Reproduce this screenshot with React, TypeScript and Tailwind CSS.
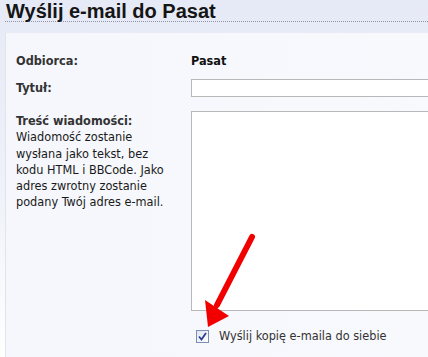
export default function App() {
  return (
    <div className="relative h-[357px] w-[428px] overflow-hidden bg-gradient-to-b from-[#e6eaf6] via-[#eef1fa] to-white font-['DejaVu_Sans_Condensed','DejaVu_Sans',Tahoma,sans-serif] text-[12.6px] text-[#1a1a1a]">
      <div className="ml-[5px] h-[22px] border-b border-dotted border-[#8f95a3]">
        <h1 className="pl-px pt-[1px] font-['Liberation_Sans',Arial,sans-serif] text-[20px] font-bold leading-[20px] text-[#151515]">
          Wyślij e-mail do Pasat
        </h1>
      </div>

      <div className="ml-[5px] mt-[11px] h-[400px] border-l border-[#e2e4ea] bg-gradient-to-r from-[#f5f7fc] to-[#f8f9fd] pl-[10px] pt-[20px]">
        <div className="flex h-[16px] items-center leading-4">
          <div className="w-[175px] shrink-0 font-bold text-[#333]">Odbiorca:</div>
          <div className="font-bold text-[#111]">Pasat</div>
        </div>

        <div className="mt-[10px] flex h-[18px] items-center">
          <div className="w-[175px] shrink-0 font-bold text-[#333]">Tytuł:</div>
          <input className="h-[18px] w-[260px] shrink-0 border border-[#b8b8b8] bg-white outline-none" />
        </div>

        <div className="mt-[14px] flex">
          <div className="w-[175px] shrink-0 whitespace-nowrap pt-[2px] leading-[16.3px]">
            <div className="font-bold text-[#333]">Treść wiadomości:</div>
            <div>
              Wiadomość zostanie
              <br />
              wysłana jako tekst, bez
              <br />
              kodu HTML i BBCode. Jako
              <br />
              adres zwrotny zostanie
              <br />
              podany Twój adres e-mail.
            </div>
          </div>
          <textarea className="h-[200px] w-[260px] shrink-0 resize-none border border-[#b8b8b8] bg-white outline-none" />
        </div>

        <div className="ml-[180px] mt-[17px] flex items-center gap-[10px] leading-4">
          <span className="flex h-[13px] w-[13px] items-center justify-center border border-[#7d8db3] bg-gradient-to-br from-[#dfe4f0] to-white">
            <svg width="9" height="9" viewBox="0 0 9 9">
              <path d="M1 4.5 L3.5 7.5 L8 1" fill="none" stroke="#2b3f94" strokeWidth="1.8" />
            </svg>
          </span>
          <span className="text-[#333]">Wyślij kopię e-maila do siebie</span>
        </div>
      </div>

      <svg className="absolute left-0 top-0" width="428" height="357" viewBox="0 0 428 357">
        <line x1="252" y1="237" x2="217" y2="305" stroke="#f20000" strokeWidth="6" strokeLinecap="round" />
        <polygon points="205,300 229,316 208,327" fill="#f20000" />
      </svg>
    </div>
  );
}
